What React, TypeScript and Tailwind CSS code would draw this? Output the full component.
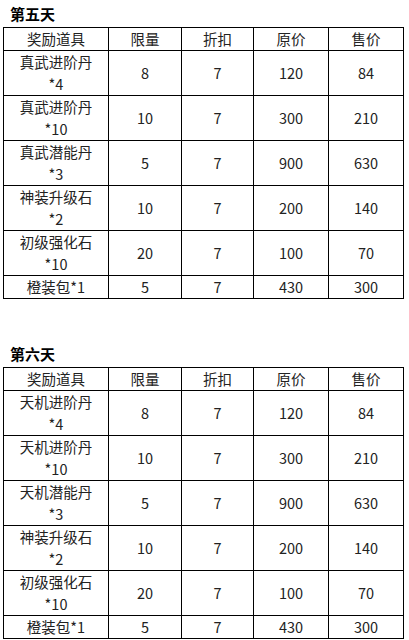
const font = { fontFamily: '"Noto Sans CJK SC", "Noto Sans", sans-serif' };

type Row = { name: string[]; limit: string; discount: string; price: string; sale: string };

const day5: Row[] = [
  { name: ['真武进阶丹', '*4'], limit: '8', discount: '7', price: '120', sale: '84' },
  { name: ['真武进阶丹', '*10'], limit: '10', discount: '7', price: '300', sale: '210' },
  { name: ['真武潜能丹', '*3'], limit: '5', discount: '7', price: '900', sale: '630' },
  { name: ['神装升级石', '*2'], limit: '10', discount: '7', price: '200', sale: '140' },
  { name: ['初级强化石', '*10'], limit: '20', discount: '7', price: '100', sale: '70' },
  { name: ['橙装包*1'], limit: '5', discount: '7', price: '430', sale: '300' },
];

const day6: Row[] = [
  { name: ['天机进阶丹', '*4'], limit: '8', discount: '7', price: '120', sale: '84' },
  { name: ['天机进阶丹', '*10'], limit: '10', discount: '7', price: '300', sale: '210' },
  { name: ['天机潜能丹', '*3'], limit: '5', discount: '7', price: '900', sale: '630' },
  { name: ['神装升级石', '*2'], limit: '10', discount: '7', price: '200', sale: '140' },
  { name: ['初级强化石', '*10'], limit: '20', discount: '7', price: '100', sale: '70' },
  { name: ['橙装包*1'], limit: '5', discount: '7', price: '430', sale: '300' },
];

function DayTable({ title, rows }: { title: string; rows: Row[] }) {
  const cell = 'border border-black text-center align-middle p-0';
  return (
    <div>
      <h3 className="pl-[10px] h-[27px] leading-[27px] text-[15px] font-bold text-black">{title}</h3>
      <table className="ml-[3px] w-[400px] border-collapse table-fixed text-[14.5px] text-[#222]">
        <colgroup>
          <col className="w-[105px]" />
          <col className="w-[73px]" />
          <col className="w-[72px]" />
          <col className="w-[75px]" />
          <col className="w-[75px]" />
        </colgroup>
        <thead>
          <tr className="h-[23px]">
            <th className={`${cell} font-normal leading-[22px]`}>奖励道具</th>
            <th className={`${cell} font-normal`}>限量</th>
            <th className={`${cell} font-normal`}>折扣</th>
            <th className={`${cell} font-normal`}>原价</th>
            <th className={`${cell} font-normal`}>售价</th>
          </tr>
        </thead>
        <tbody>
          {rows.map((r, i) => (
            <tr key={i} className={r.name.length > 1 ? 'h-[45px]' : 'h-[23px]'}>
              <td className={`${cell} leading-[22px]`}>
                {r.name.map((n) => (
                  <div key={n}>{n}</div>
                ))}
              </td>
              <td className={cell}>{r.limit}</td>
              <td className={cell}>{r.discount}</td>
              <td className={cell}>{r.price}</td>
              <td className={cell}>{r.sale}</td>
            </tr>
          ))}
        </tbody>
      </table>
    </div>
  );
}

export default function App() {
  return (
    <div className="w-[409px] h-[640px] bg-white overflow-hidden" style={font}>
      <DayTable title="第五天" rows={day5} />
      <div className="h-[41px]" />
      <DayTable title="第六天" rows={day6} />
    </div>
  );
}
